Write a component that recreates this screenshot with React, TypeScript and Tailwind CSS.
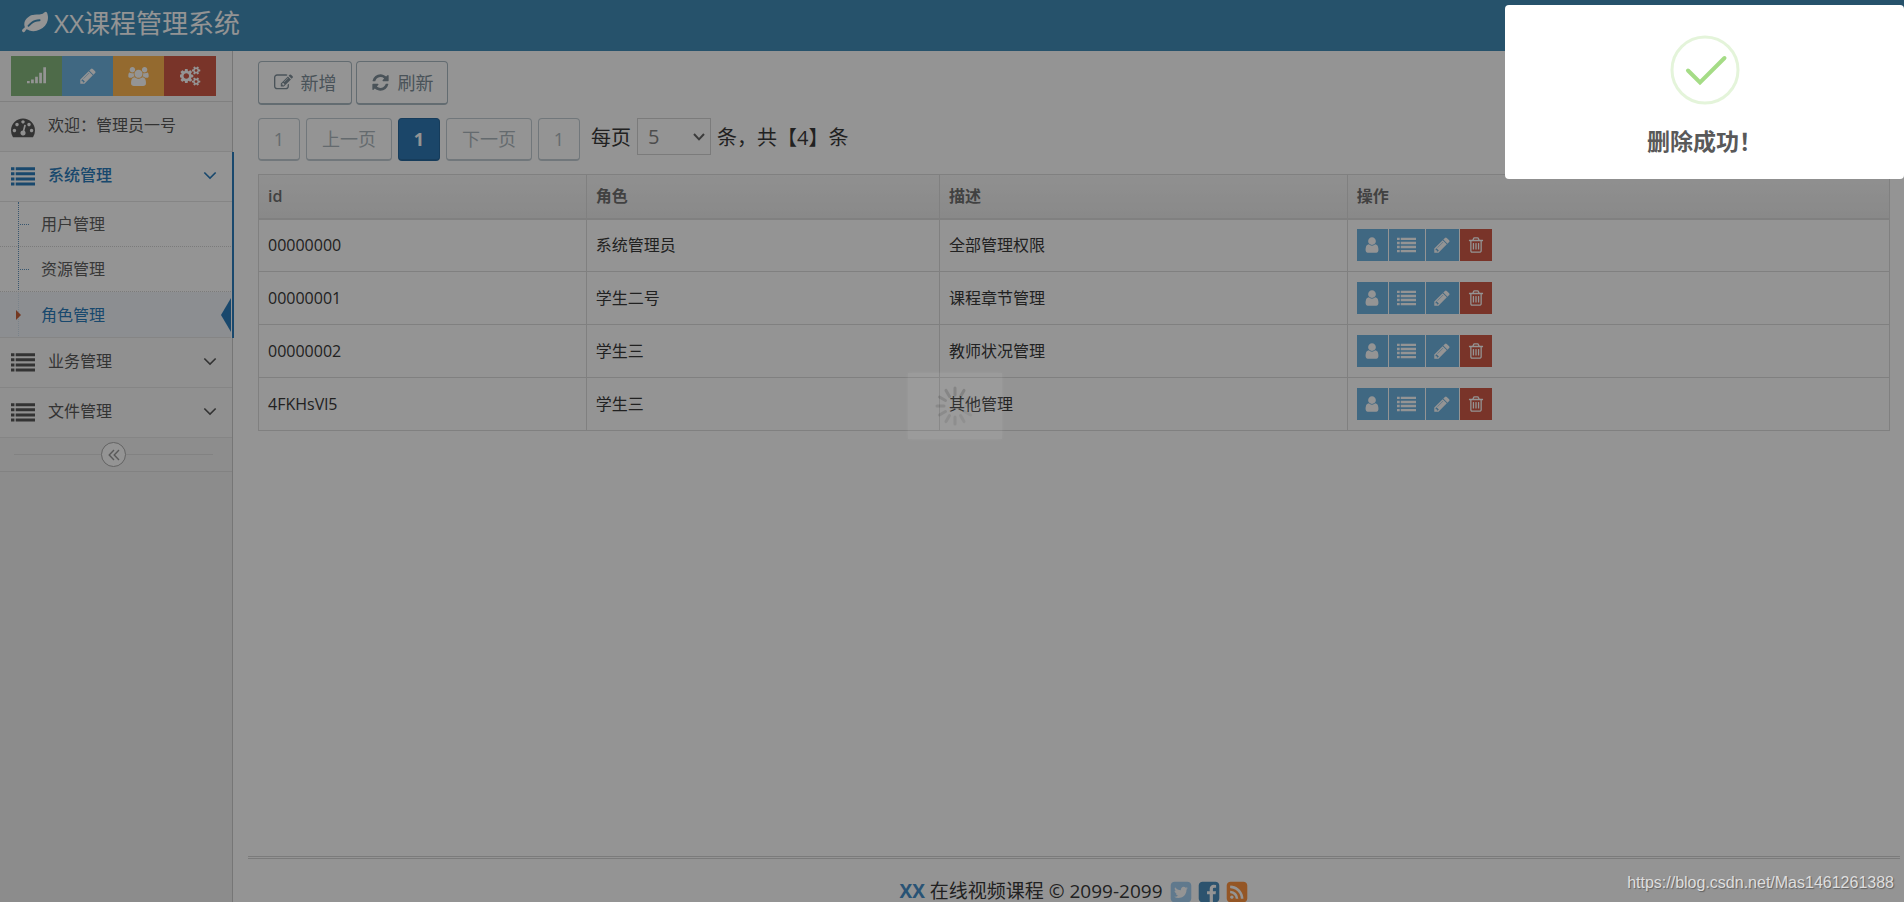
import React, { useState } from 'react';

interface IconProps {
  path: string;
  className?: string;
  viewBox?: string;
}

interface IRole {
  id: string;
  name: string;
  desc: string;
}

const COG_SMALL = 'v140q0 16-149 31-12 27-30 52 51 113 51 138 0 4-4 7-122 71-124 71-8 0-46-47t-52-68q-20 2-30 2t-30-2q-14 21-52 68t-46 47q-2 0-124-71-4-3-4-7 0-25 51-138-18-25-30-52-149-15-149-31v-140q0-16 149-31 13-29 30-52-51-113-51-138 0-4 4-7 4-2 35-20t59-34 30-16q8 0 46 46.5t52 67.5q20-2 30-2t30 2q51-71 92-112l6-2q4 0 124 70 4 3 4 7 0 25-51 138 17 23 30 52 149 15 149 31z';

const icons = {
  leaf: 'M1280 704q0-26-19-45t-45-19q-172 0-318 49.5t-259.5 134-235.5 219.5q-19 21-19 45 0 26 19 45t45 19q24 0 45-19 27-24 74-71t67-66q137-124 268.5-176t313.5-52q26 0 45-19t19-45zm512-198q0 95-20 193-46 224-184.5 383t-357.5 268q-214 108-438 108-148 0-286-47-15-5-88-42t-96-37q-16 0-39.5 32t-45 70-52.5 70-60 32q-43 0-63.5-17.5t-45.5-59.5q-2-4-6-11t-5.5-10-3-9.5-1.5-13.5q0-35 31-73.5t68-65.5 68-56 31-48q0-4-14-38t-16-44q-9-51-9-104 0-115 43.5-220t119-184.5 170.5-139 204-95.5q55-18 145-25.5t179.5-9 178.5-6 163.5-24 113.5-56.5l29.5-29.5 29.5-28 27-20 36.5-16 43.5-4.5q39 0 70.5 46t47.5 112 24 124 8 96z',
  signal: 'M0 1312h256v224h-256zM384 1184h256v352h-256zM768 928h256v608h-256zM1152 544h256v992h-256zM1536 32h256v1504h-256z',
  pencil: 'M491 1536l91-91-235-235-91 91v107h128v128h107zm523-928q0-22-22-22-10 0-17 7l-542 542q-7 7-7 17 0 22 22 22 10 0 17-7l542-542q7-7 7-17zm-54-192l416 416-832 832h-416v-416zm683 96q0 53-37 90l-166 166-416-416 166-165q36-38 90-38 53 0 91 38l235 234q37 39 37 91z',
  users: 'M529 896q-162 5-265 128h-134q-82 0-138-40.5t-56-118.5q0-353 124-353 6 0 43.5 21t97.5 42.5 119 21.5q67 0 133-23-5 37-5 66 0 139 81 256zm1071 637q0 120-73 189.5t-194 69.5h-874q-121 0-194-69.5t-73-189.5q0-53 3.5-103.5t14-109 26.5-108.5 43-97.5 62-81 85.5-53.5 111.5-20q10 0 43 21.5t73 48 107 48 135 21.5 135-21.5 107-48 73-48 43-21.5q61 0 111.5 20t85.5 53.5 62 81 43 97.5 26.5 108.5 14 109 3.5 103.5zm-1024-1277q0 106-75 181t-181 75-181-75-75-181 75-181 181-75 181 75 75 181zm704 384q0 159-112.5 271.5t-271.5 112.5-271.5-112.5-112.5-271.5 112.5-271.5 271.5-112.5 271.5 112.5 112.5 271.5zm576 225q0 78-56 118.5t-138 40.5h-134q-103-123-265-128 81-117 81-256 0-29-5-66 66 23 133 23 59 0 119-21.5t97.5-42.5 43.5-21q124 0 124 353zm-128-609q0 106-75 181t-181 75-181-75-75-181 75-181 181-75 181 75 75 181z',
  cogs: 'M832 896q0-106-75-181t-181-75-181 75-75 181 75 181 181 75 181-75 75-181zm768 512q0-52-38-90t-90-38-90 38-38 90q0 53 37.5 90.5t90.5 37.5 90.5-37.5 37.5-90.5zm0-1024q0-52-38-90t-90-38-90 38-38 90q0 53 37.5 90.5t90.5 37.5 90.5-37.5 37.5-90.5zm-384 421v185q0 10-7 19.5t-16 10.5l-155 24q-11 35-32 76 34 48 90 115 7 11 7 20 0 12-7 19-23 30-82.5 89.5t-78.5 59.5q-11 0-21-7l-115-90q-37 19-77 31-11 108-23 155-7 24-30 24h-186q-11 0-20-7.5t-10-17.5l-23-153q-34-10-75-31l-118 89q-7 7-20 7-11 0-21-8-144-133-144-160 0-9 7-19 10-14 41-53t47-61q-23-44-35-82l-152-24q-10-1-17-9.5t-7-19.5v-185q0-10 7-19.5t16-10.5l155-24q11-35 32-76-34-48-90-115-7-11-7-20 0-12 7-20 22-30 82-89t79-59q11 0 21 7l115 90q34-18 77-32 11-108 23-154 7-24 30-24h186q11 0 20 7.5t10 17.5l23 153q34 10 75 31l118-89q8-7 20-7 11 0 21 8 144 133 144 160 0 8-7 19-12 16-42 54t-45 60q23 48 34 82l152 23q10 2 17 10.5t7 19.5zM1856 1338' + COG_SMALL + 'M1856 314' + COG_SMALL,
  dashboard: 'M384 1152q0-53-37.5-90.5t-90.5-37.5-90.5 37.5-37.5 90.5 37.5 90.5 90.5 37.5 90.5-37.5 37.5-90.5zm192-448q0-53-37.5-90.5t-90.5-37.5-90.5 37.5-37.5 90.5 37.5 90.5 90.5 37.5 90.5-37.5 37.5-90.5zm428 481l101-382q6-26-7.5-48.5t-38.5-29.5-48 6.5-30 39.5l-101 382q-60 5-107 43.5t-63 98.5q-20 77 20 146t117 89 146-20 89-117q16-60-6-117t-72-91zm660-33q0-53-37.5-90.5t-90.5-37.5-90.5 37.5-37.5 90.5 37.5 90.5 90.5 37.5 90.5-37.5 37.5-90.5zm-640-640q0-53-37.5-90.5t-90.5-37.5-90.5 37.5-37.5 90.5 37.5 90.5 90.5 37.5 90.5-37.5 37.5-90.5zm448 192q0-53-37.5-90.5t-90.5-37.5-90.5 37.5-37.5 90.5 37.5 90.5 90.5 37.5 90.5-37.5 37.5-90.5zm320 448q0 261-141 483-19 29-54 29h-1402q-35 0-54-29-141-221-141-483 0-182 71-348t191-286 286-191 348-71 348 71 286 191 191 286 71 348z',
  list: 'M0 1312h256v224h-256zM0 928h256v224h-256zM0 544h256v224h-256zM0 160h256v224h-256zM352 1312h1440v224h-1440zM352 928h1440v224h-1440zM352 544h1440v224h-1440zM352 160h1440v224h-1440z',
  edit: 'M888 1184l116-116-152-152-116 116v56h96v96h56zm440-720q-16-16-33 1l-350 350q-17 17-1 33t33-1l350-350q17-17 1-33zm80 594v190q0 119-84.5 203.5t-203.5 84.5h-832q-119 0-203.5-84.5t-84.5-203.5v-832q0-119 84.5-203.5t203.5-84.5h832q63 0 117 25 15 7 18 23 3 17-9 29l-49 49q-14 14-32 8-23-6-45-6h-832q-66 0-113 47t-47 113v832q0 66 47 113t113 47h832q66 0 113-47t47-113v-126q0-13 9-22l64-64q15-15 35-7t20 29zm-96-738l288 288-672 672h-288v-288zm444 132l-92 92-288-288 92-92q28-28 68-28t68 28l152 152q28 28 28 68t-28 68z',
  refresh: 'M1639 1056q0 5-1 7-64 268-268 434.5t-478 166.5q-146 0-282.5-55t-243.5-157l-129 129q-19 19-45 19t-45-19-19-45v-448q0-26 19-45t45-19h448q26 0 45 19t19 45-19 45l-137 137q71 66 161 102t187 36q134 0 250-65t186-179q11-17 53-117 8-23 30-23h192q13 0 22.5 9.5t9.5 22.5zm25-800v448q0 26-19 45t-45 19h-448q-26 0-45-19t-19-45 19-45l138-138q-148-137-349-137-134 0-250 65t-186 179q-11 17-53 117-8 23-30 23h-199q-13 0-22.5-9.5t-9.5-22.5v-7q65-268 270-434.5t480-166.5q146 0 284 55.5t245 156.5l130-129q19-19 45-19t45 19 19 45z',
  user: 'M1536 1399q0 109-62.5 187t-150.5 78h-854q-88 0-150.5-78t-62.5-187q0-85 8.5-160.5t31.5-152 58.5-131 94-89 134.5-34.5q131 128 313 128t313-128q76 0 134.5 34.5t94 89 58.5 131 31.5 152 8.5 160.5zm-256-887q0 159-112.5 271.5t-271.5 112.5-271.5-112.5-112.5-271.5 112.5-271.5 271.5-112.5 271.5 112.5 112.5 271.5z',
  trash: 'M704 736v576q0 14-9 23t-23 9h-64q-14 0-23-9t-9-23v-576q0-14 9-23t23-9h64q14 0 23 9t9 23zm256 0v576q0 14-9 23t-23 9h-64q-14 0-23-9t-9-23v-576q0-14 9-23t23-9h64q14 0 23 9t9 23zm256 0v576q0 14-9 23t-23 9h-64q-14 0-23-9t-9-23v-576q0-14 9-23t23-9h64q14 0 23 9t9 23zm128 724v-948h-896v948q0 22 7 40.5t14.5 27 10.5 8.5h832q3 0 10.5-8.5t14.5-27 7-40.5zm-672-1076h448l-48-117q-7-9-17-11h-317q-10 2-17 11zm928 32v64q0 14-9 23t-23 9h-96v948q0 83-47 143.5t-113 60.5h-832q-66 0-113-58.5t-47-141.5v-952h-96q-14 0-23-9t-9-23v-64q0-14 9-23t23-9h309l70-167q15-37 54-63t79-26h320q40 0 79 26t54 63l70 167h309q14 0 23 9t9 23z',
  down: 'M1395 736q0 13-10 23l-466 466q-10 10-23 10t-23-10l-466-466q-10-10-10-23t10-23l50-50q10-10 23-10t23 10l393 393 393-393q10-10 23-10t23 10l50 50q10 10 10 23z',
  twitter: 'M1408 610q-56 25-121 34 68-40 93-117-65 38-134 51-61-66-153-66-87 0-148.5 61.5t-61.5 148.5q0 29 5 48-129-7-242-65t-192-155q-29 50-29 106 0 114 91 175-47-1-100-26v2q0 75 50 133.5t123 72.5q-29 8-51 8-13 0-39-4 21 63 74.5 104t121.5 42q-116 90-261 90-26 0-50-3 148 94 322 94 112 0 210-35.5t168-95 120.5-137 75-162 24.5-168.5q0-18-1-27 63-45 105-109zm256-194v960q0 119-84.5 203.5t-203.5 84.5h-960q-119 0-203.5-84.5t-84.5-203.5v-960q0-119 84.5-203.5t203.5-84.5h960q119 0 203.5 84.5t84.5 203.5z',
  facebook: 'M1376 128q119 0 203.5 84.5t84.5 203.5v960q0 119-84.5 203.5t-203.5 84.5h-188v-595h199l30-232h-229v-148q0-56 23.5-84t91.5-28l122-1v-207q-63-9-178-9-136 0-217.5 80t-81.5 226v171h-200v232h200v595h-532q-119 0-203.5-84.5t-84.5-203.5v-960q0-119 84.5-203.5t203.5-84.5h960z',
  rss: 'M640 1280q0-53-37.5-90.5t-90.5-37.5-90.5 37.5-37.5 90.5 37.5 90.5 90.5 37.5 90.5-37.5 37.5-90.5zm351 94q-13-232-177-396t-396-177q-14-1-24 9t-10 23v128q0 13 8.5 22t21.5 10q154 11 264 121t121 264q1 13 10 21.5t22 8.5h128q13 0 23-10t9-24zm384 1q-5-154-56-297.5t-139.5-260-205-205-260-139.5-297.5-56q-14-1-23 9-10 10-10 23v128q0 13 9 22t22 10q204 7 378 111.5t278.5 278.5 111.5 378q1 13 10 22t22 9h128q13 0 23-10 11-9 9-23zm289-959v960q0 119-84.5 203.5t-203.5 84.5h-960q-119 0-203.5-84.5t-84.5-203.5v-960q0-119 84.5-203.5t203.5-84.5h960q119 0 203.5 84.5t84.5 203.5z',
};

const roles: IRole[] = [
  { id: '00000000', name: '系统管理员', desc: '全部管理权限' },
  { id: '00000001', name: '学生二号', desc: '课程章节管理' },
  { id: '00000002', name: '学生三', desc: '教师状况管理' },
  { id: '4FKHsVl5', name: '学生三', desc: '其他管理' },
];

const shortcuts = [
  { label: '统计', path: icons.signal, bg: 'w-[51px] bg-[#87b87f]', icon: 'w-[19px] h-[19px]', viewBox: '0 0 1792 1792' },
  { label: '编辑', path: icons.pencil, bg: 'w-[51px] bg-[#6fb3e0]', icon: 'w-[18px] h-[18px]', viewBox: '0 0 1792 1792' },
  { label: '用户', path: icons.users, bg: 'w-[51px] bg-[#ffb752]', icon: 'w-[21px] h-[19px]', viewBox: '-64 0 1920 1792' },
  { label: '设置', path: icons.cogs, bg: 'w-[52px] bg-[#d15b47]', icon: 'w-[21px] h-[20px]', viewBox: '0 0 1920 1792' },
];

const submenu = ['用户管理', '资源管理', '角色管理'];

function Icon({ path, className, viewBox = '0 0 1792 1792' }: IconProps) {
  return (
    <svg viewBox={viewBox} className={className} fill="currentColor" aria-hidden="true">
      <path d={path} />
    </svg>
  );
}

function MenuItem({ title, active }: { title: string; active?: boolean }) {
  const color = active ? 'bg-white text-[#2b7dbc] font-medium' : 'bg-[#f8f8f8] text-[#585858]';

  return (
    <a href="#" className={'flex h-[50px] items-center border-b border-[#e5e5e5] pl-[11px] pr-[11px] pb-1 ' + color}>
      <Icon path={icons.list} className="mt-1 h-6 w-6" />
      <span className="ml-[13px] flex-1">{title}</span>
      <Icon path={icons.down} className="h-[22px] w-[22px]" />
    </a>
  );
}

function Sidebar() {
  return (
    <aside className="flex w-[233px] shrink-0 flex-col border-r border-[#ccc] bg-[#f2f2f2] text-base leading-6">
      <div className="flex h-[51px] border-b border-[#ddd] bg-[#fafafa] pl-[11px] pt-[5px]">
        {shortcuts.map((s) => (
          <button key={s.label} aria-label={s.label} className={'flex h-10 items-center justify-center text-white ' + s.bg}>
            <Icon path={s.path} className={s.icon} viewBox={s.viewBox} />
          </button>
        ))}
      </div>

      <nav>
        <a href="#" className="flex h-[50px] items-center border-b border-[#e5e5e5] bg-[#f8f8f8] pb-1 pl-[11px] text-[#585858]">
          <Icon path={icons.dashboard} className="mt-1 h-6 w-6" />
          <span className="ml-[13px]">欢迎：管理员一号</span>
        </a>

        <div className="-mr-[2px] border-r-2 border-[#2b7dbc]">
          <MenuItem title="系统管理" active />
          <ul className="relative bg-white pr-px">
            <li className="absolute inset-y-0 left-[18px] border-l border-dotted border-[#5f94c0]" aria-hidden="true" />
            {submenu.map((item) => {
              const current = item === '角色管理';
              return (
                <li
                  key={item}
                  className={'relative flex items-center border-b ' + (current ? 'h-[46px] border-[#e5e5e5] bg-[#edf3f9]/80' : 'h-[45px] border-dotted border-[#d4d4d4]')}
                >
                  {current ? (
                    <svg className="ml-4 h-[10px] w-[5px] text-[#c86139]" viewBox="0 0 5 10" fill="currentColor"><path d="M0 0L5 5L0 10z" /></svg>
                  ) : (
                    <span className="ml-5 w-[9px] border-t border-dotted border-[#5f94c0]" />
                  )}
                  <a href="#" className={current ? 'ml-5 flex-1 text-[#2b7dbc]' : 'ml-3 flex-1 text-[#616161]'}>{item}</a>
                  {current && (
                    <svg className="h-[34px] w-[10px] text-[#2b7dbc]" viewBox="0 0 10 34" fill="currentColor"><path d="M10 0L0 17L10 34z" /></svg>
                  )}
                </li>
              );
            })}
          </ul>
        </div>

        <MenuItem title="业务管理" />
        <MenuItem title="文件管理" />
      </nav>

      <div className="flex h-[34px] items-center border-b border-[#e0e0e0] bg-[#f3f3f3] pl-[14px] pr-[19px]">
        <span className="flex-1 border-t border-[#e0e0e0]" />
        <button aria-label="收起菜单" className="flex h-[25px] w-[25px] items-center justify-center rounded-full border border-[#aaa] bg-white text-[#999]">
          <svg viewBox="0 0 12 12" className="h-3 w-3" fill="none" stroke="currentColor" strokeWidth="1.4">
            <path d="M6 1L1.2 6L6 11M11 1L6.2 6L11 11" />
          </svg>
        </button>
        <span className="flex-1 border-t border-[#e0e0e0]" />
      </div>
    </aside>
  );
}

const pageBtn = 'h-[43px] rounded border border-b-2 text-lg leading-6 ';

function Pager() {
  const [size, setSize] = useState('5');
  const disabled = pageBtn + 'border-[#abbac3] text-[#8b9aa3] opacity-70';

  return (
    <div className="mt-[13px] flex items-start gap-[6px] text-xl text-[#393939]">
      <button disabled className={disabled + ' w-[42px]'}>1</button>
      <button disabled className={disabled + ' w-[86px]'}>上一页</button>
      <button className={pageBtn + 'w-[42px] border-[#27689d] bg-[#2f79b5] font-bold text-white'}>1</button>
      <button disabled className={disabled + ' w-[86px]'}>下一页</button>
      <button disabled className={disabled + ' w-[42px]'}>1</button>
      <label htmlFor="page-size" className="ml-[5px] leading-10">每页</label>
      <span className="relative">
        <select
          id="page-size"
          value={size}
          onChange={(e) => setSize(e.target.value)}
          className="h-[37px] w-[74px] appearance-none border border-[#d5d5d5] bg-white pl-[10px] text-xl leading-6 text-[#858585]"
        >
          <option>5</option>
          <option>10</option>
          <option>20</option>
        </select>
        <svg viewBox="0 0 12 8" className="pointer-events-none absolute right-[6px] top-[15px] h-2 w-3" fill="none" stroke="#666" strokeWidth="2">
          <path d="M1 1L6 6.4L11 1" />
        </svg>
      </span>
      <span className="leading-10">条，共【4】条</span>
    </div>
  );
}

function RoleTable() {
  const cell = 'border border-[#ddd] px-[9px] text-left';
  const head = cell + ' border-b-2 font-semibold';

  return (
    <table className="mt-[13px] w-full table-fixed border-collapse text-base leading-6 text-[#393939]">
      <thead>
        <tr className="h-11 bg-linear-to-b from-[#f8f8f8] to-[#ececec] text-[#707070]">
          <th className={head + ' w-[20.1%]'}>id</th>
          <th className={head + ' w-[21.65%]'}>角色</th>
          <th className={head + ' w-[25%]'}>描述</th>
          <th className={head}>操作</th>
        </tr>
      </thead>
      <tbody>
        {roles.map((role) => (
          <tr key={role.id} className="h-[53px]">
            <td className={cell}>{role.id}</td>
            <td className={cell}>{role.name}</td>
            <td className={cell}>{role.desc}</td>
            <td className={cell}>
              <div className="flex gap-px text-white">
                <button aria-label="用户" className="flex h-8 w-[31px] items-center justify-center bg-[#6fb3e0]">
                  <Icon path={icons.user} className="h-[18px] w-[18px]" />
                </button>
                <button aria-label="资源" className="flex h-8 w-9 items-center justify-center bg-[#6fb3e0]">
                  <Icon path={icons.list} className="h-[19px] w-[19px]" />
                </button>
                <button aria-label="编辑" className="flex h-8 w-[33px] items-center justify-center bg-[#6fb3e0]">
                  <Icon path={icons.pencil} className="h-[18px] w-[18px]" />
                </button>
                <button aria-label="删除" className="flex h-8 w-8 items-center justify-center bg-[#d15b47]">
                  <Icon path={icons.trash} className="h-[18px] w-[18px]" />
                </button>
              </div>
            </td>
          </tr>
        ))}
      </tbody>
    </table>
  );
}

function Loading() {
  return (
    <div className="absolute inset-x-0 top-[373px] flex justify-center pl-[6px]">
      <div className="flex h-[66px] w-[94px] items-center justify-center bg-white/7 shadow-[0_0_4px_rgba(255,255,255,0.08)]">
        <svg viewBox="-20 -20 40 40" className="h-10 w-10" stroke="#000" strokeWidth="3" strokeLinecap="round">
          {[0, 1, 2, 3, 4, 5, 6, 7, 8, 9, 10, 11].map((i) => (
            <path key={i} d="M0 -11V-18" transform={`rotate(${30 - i * 30})`} opacity={0.15 - i * 0.011} />
          ))}
        </svg>
      </div>
    </div>
  );
}

function SuccessToast() {
  return (
    <div role="alert" className="absolute right-0 top-[5px] flex h-[174px] w-[399px] flex-col items-center rounded-[4px] bg-white pt-[30px]">
      <svg viewBox="0 0 70 70" className="h-[70px] w-[70px]" fill="none">
        <circle cx="35" cy="35" r="33" stroke="#a5dc86" strokeOpacity="0.3" strokeWidth="3" />
        <path d="M18 35.5L30 47.5L54.500 23" stroke="#a5dc86" strokeWidth="4" strokeLinecap="round" />
      </svg>
      <h2 className="mt-5 text-[23px] font-bold leading-8 text-[#595959]">删除成功！</h2>
    </div>
  );
}

export default function App() {
  const toolBtn = 'flex h-11 items-center justify-center rounded border border-b-2 border-[#abbac3] text-lg leading-6 text-[#80909a]';

  return (
    <div className="relative flex h-screen flex-col overflow-hidden bg-white font-['Open_Sans','Noto_Sans_CJK_SC',sans-serif]">
      <header className="flex h-[51px] shrink-0 items-center bg-[#438eb9] pb-[6px] pl-[22px] text-white">
        <a href="#" className="flex items-center gap-[6px] text-[26px] leading-9">
          <Icon path={icons.leaf} className="h-[26px] w-[26px]" />
          XX课程管理系统
        </a>
      </header>

      <div className="flex min-h-0 flex-1">
        <Sidebar />
        <div className="flex min-w-0 flex-1 flex-col">
          <main className="flex-1 pl-[25px] pr-[14px] pt-[10px]">
            <div className="flex gap-1">
              <button className={toolBtn + ' w-[94px] gap-2'}>
                <Icon path={icons.edit} className="h-[19px] w-[19px]" />
                新增
              </button>
              <button className={toolBtn + ' w-[92px] gap-2'}>
                <Icon path={icons.refresh} className="h-[19px] w-[19px]" />
                刷新
              </button>
            </div>
            <Pager />
            <RoleTable />
          </main>

          <footer className="ml-[15px] mr-1 flex h-[46px] items-start justify-center border-t-3 border-double border-[#d5d5d5] pt-[18px] text-[19px] leading-7 text-[#393939]">
            <p>
              <span className="font-bold text-[#478fca]">XX</span> 在线视频课程 © 2099-2099
            </p>
            <a href="#" aria-label="Twitter" className="ml-[6px] pt-[3px] text-[#a6d0f3]"><Icon path={icons.twitter} className="h-6 w-6" /></a>
            <a href="#" aria-label="Facebook" className="ml-1 pt-[3px] text-[#4c8fbd]"><Icon path={icons.facebook} className="h-6 w-6" /></a>
            <a href="#" aria-label="RSS" className="ml-1 pt-[3px] text-[#ff9440]"><Icon path={icons.rss} className="h-6 w-6" /></a>
          </footer>
        </div>
      </div>

      <div className="absolute inset-0 bg-black/42" />
      <Loading />
      <SuccessToast />
      <p className="absolute bottom-[7px] right-[10px] font-['Liberation_Sans',sans-serif] text-base leading-6 text-[#dedede] [text-shadow:1px_1px_1px_rgba(0,0,0,0.35)]">
        https://blog.csdn.net/Mas1461261388
      </p>
    </div>
  );
}
